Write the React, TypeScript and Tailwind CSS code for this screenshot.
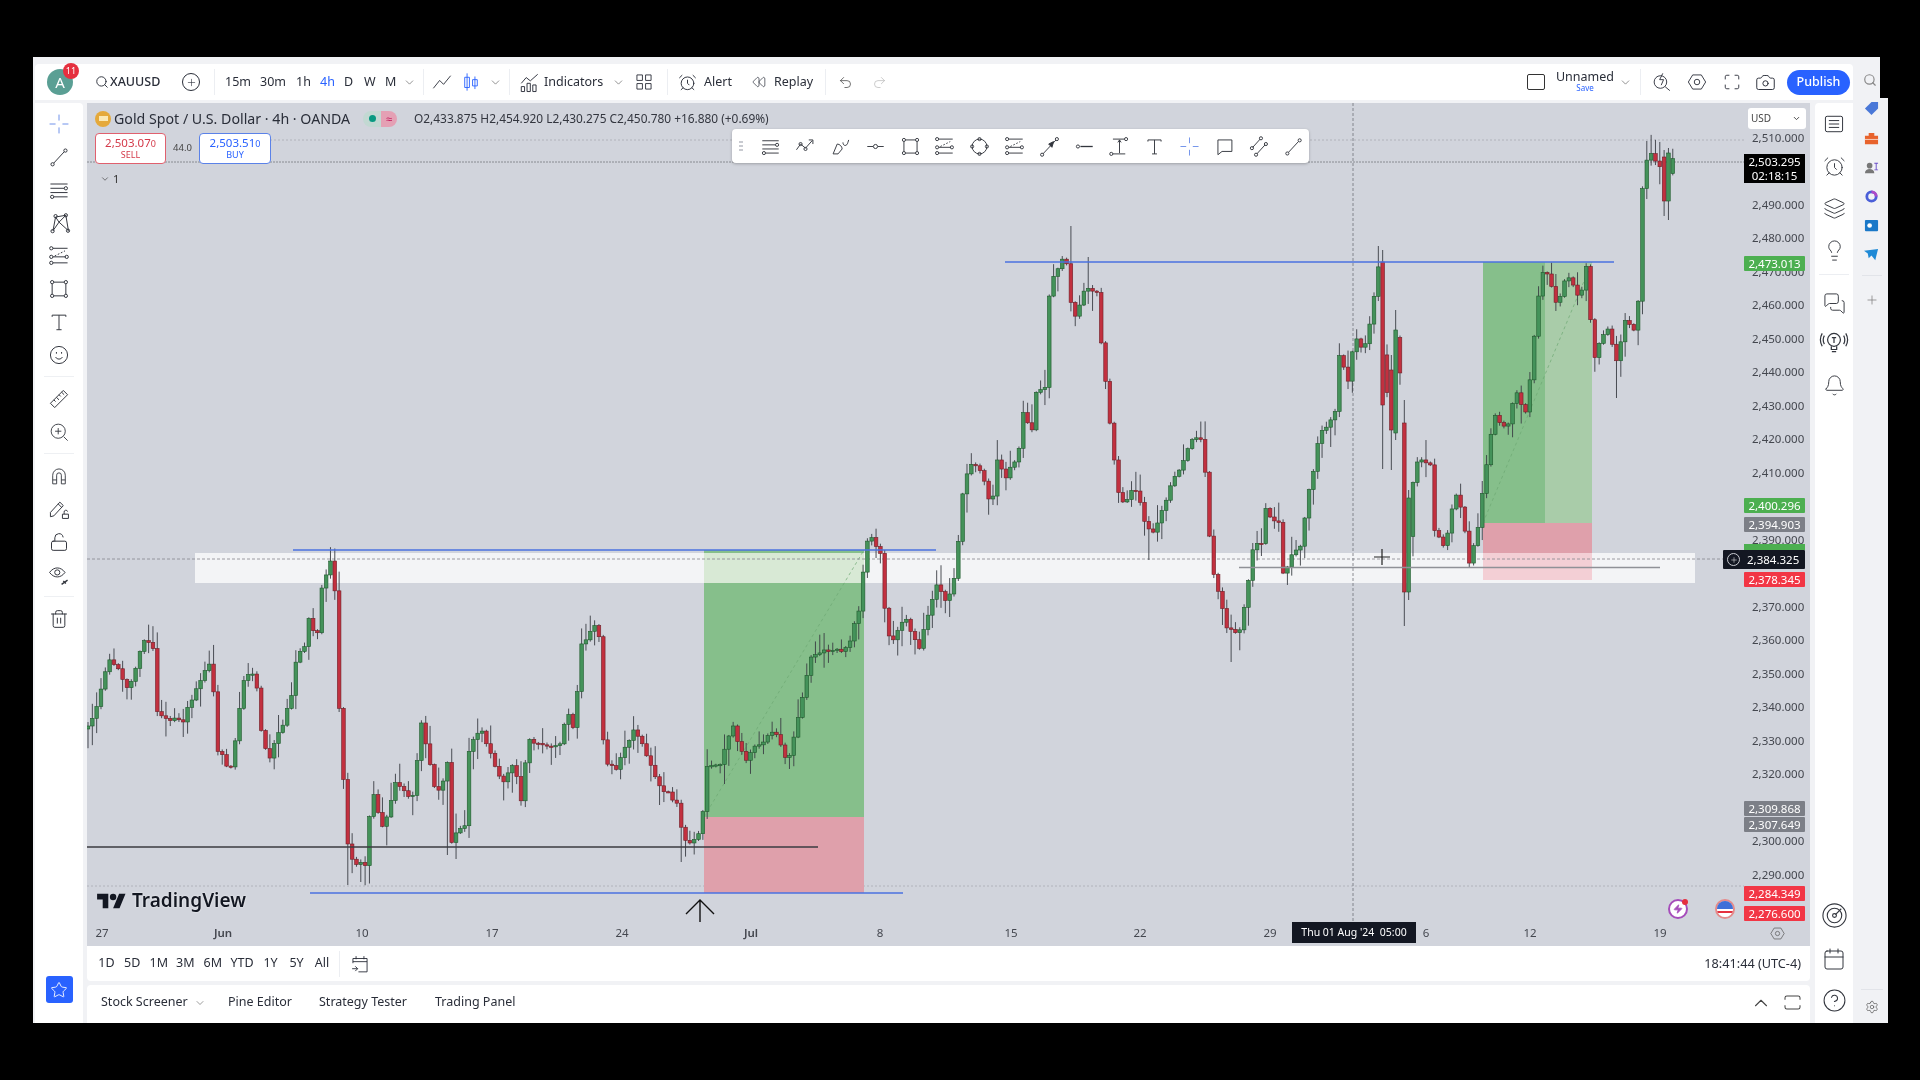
import React from 'react';
import {
  AlarmClock, Bell, Calendar, Camera, ChevronDown, ChevronUp, CircleHelp, Layers, Lightbulb,
  LockOpen, Maximize, MessagesSquare, Plus, Redo2, Rewind, Search, Settings, Star, Trash2, Undo2, Zap,
} from 'lucide-react';

const FONT = "font-['Noto_Sans','Liberation_Sans',sans-serif]";

// zoom-crop coordinates of the price path, converted to page pixels below
const leftPath = [[15,625],[35,530],[55,410],[90,510],[115,350],[135,380],[140,580],[185,610],[240,415],[250,690],[275,750],[300,460],[320,460],[330,625],[345,720],[385,540],[395,410],[415,380],[418,270],[430,385],[440,200],[462,90],[470,490],[480,770],[490,1020],[520,1035],[525,900],[535,830],[555,930],[575,780],[610,840],[620,590],[635,710],[650,840],[670,730],[675,970],[705,900],[710,660],[735,640],[770,790],[790,730],[805,850],[815,660],[880,680],[885,560],[900,630],[915,370],[945,310],[955,710],[975,750],[1010,620],[1050,780],[1090,860],[1100,970],[1125,965],[1135,885],[1140,735],[1165,745],[1190,610],[1210,720],[1265,630],[1290,735],[1320,510],[1335,400],[1400,390],[1425,240],[1430,90],[1440,50],[1460,110],[1465,235],[1478,375],[1505,290],[1530,385],[1560,200]]
  .map(([x, y]) => [80 + x / 1.823, 520 + y / 3]);
const rightPath = [[15,1320],[30,1230],[45,1000],[55,940],[75,940],[100,1070],[105,910],[125,970],[150,920],[155,775],[175,850],[185,715],[200,750],[205,500],[215,410],[240,355],[255,530],[280,440],[300,455],[310,630],[325,815],[340,1020],[355,1050],[370,985],[395,1110],[410,1120],[435,1020],[475,890],[490,855],[505,875],[510,1080],[525,1260],[550,1400],[575,1400],[600,1160],[615,1165],[620,1055],[650,1110],[652,1260],[675,1190],[690,1155],[700,1060],[725,860],[755,800],[760,610],[785,735],[790,580],[810,615],[825,515],[840,370],[850,770],[862,660],[875,560],[885,820],[890,1290],[900,1030],[915,905],[940,950],[945,1120],[965,1180],[985,1020],[1000,1060],[1010,1225],[1030,1110],[1040,980],[1050,880],[1060,800],[1085,830],[1100,735],[1120,790],[1130,665],[1145,465],[1155,375],[1180,490],[1200,405],[1225,475],[1235,365],[1250,640],[1280,540],[1290,670],[1310,530],[1325,570],[1335,470],[1340,195],[1355,40],[1365,85],[1380,110],[1390,200],[1395,65],[1410,85]]
  .map(([x, y]) => [940 + x / 1.912, 130 + y / 2.8]);
const path = [...leftPath, ...rightPath];

// long wicks read off the reference: x, tip y
const spikes = [[349,885],[362,882],[683,862],[447,855],[1232,662],[1072,226],[1617,398],[1150,560],[1379,246],[1648,141],[1090,257]];

// single large candles the sampling would split: x, open, close, high, low
const forced = [[1384,262,405,250,469],[1391,370,430,355,470],[1396,433,330,310,440],[1404,423,592,400,626],[1409,592,498,490,600],[1665,157,201,150,216],[1669,201,153,148,220]];

const interp = (x: number) => {
  for (let i = 1; i < path.length; i++) {
    if (x <= path[i][0]) {
      const [x0, y0] = path[i - 1];
      const [x1, y1] = path[i];
      return y0 + (y1 - y0) * ((x - x0) / Math.max(x1 - x0, 0.01));
    }
  }
  return path[path.length - 1][1];
};

let seed = 41;
const rand = () => {
  seed = (seed * 16807) % 2147483647;
  return seed / 2147483647;
};

const candles: { x: number; open: number; close: number; hi: number; lo: number }[] = [];
let prev = interp(88);
for (let x = 88; x <= 1677; x += 4.33) {
  const close = interp(x) + (rand() - 0.5) * 6;
  const top = Math.min(prev, close);
  const bot = Math.max(prev, close);
  let hi = top - Math.pow(rand(), 2) * 19 - 1;
  let lo = bot + Math.pow(rand(), 2) * 19 + 1;
  for (const [sx, sy] of spikes) {
    if (Math.abs(sx - x) <= 2.2) {
      if (sy < hi) hi = sy;
      if (sy > lo) lo = sy;
    }
  }
  candles.push({ x, open: prev, close, hi, lo });
  prev = close;
}
for (const [fx, open, close, hi, lo] of forced) {
  const c = candles.reduce((a, b) => (Math.abs(b.x - fx) < Math.abs(a.x - fx) ? b : a));
  Object.assign(c, { open, close, hi, lo });
}

const priceY = (p: number) => 138 + (2510 - p) * 3.348;
const priceTicks = [2510, 2490, 2480, 2470, 2460, 2450, 2440, 2430, 2420, 2410, 2390, 2370, 2360, 2350, 2340, 2330, 2320, 2300, 2290];
const dateTicks: [string, number, boolean][] = [['27',102,false],['Jun',223,true],['10',362,false],['17',492,false],['24',622,false],['Jul',751,true],['8',880,false],['15',1011,false],['22',1140,false],['29',1270,false],['6',1426,false],['12',1530,false],['19',1660,false]];
const tags: [string, number, string][] = [
  ['2,473.013', 256, 'bg-[#4caf50]'],
  ['2,400.296', 498, 'bg-[#4caf50]'],
  ['2,394.903', 517, 'bg-[#7c7f87]'],
  ['2,378.345', 572, 'bg-[#f23645]'],
  ['2,309.868', 801, 'bg-[#7c7f87]'],
  ['2,307.649', 817, 'bg-[#7c7f87]'],
  ['2,284.349', 886, 'bg-[#f23645]'],
  ['2,276.600', 906, 'bg-[#f23645]'],
];
const ranges: [string, string][] = [
  ['1D', 'w-[25px]'], ['5D', 'w-[26.5px]'], ['1M', 'w-[26.5px]'], ['3M', 'w-[26.5px]'], ['6M', 'w-[28.5px]'],
  ['YTD', 'w-[30px]'], ['1Y', 'w-[27px]'], ['5Y', 'w-[25px]'], ['All', 'w-[26px]'],
];

const Ic = ({ children, className = '', size = 24 }: { children: React.ReactNode; className?: string; size?: number }) => (
  <svg viewBox="0 0 28 28" width={size} height={size} fill="none" stroke="currentColor" strokeWidth={1.15} className={className}>
    {children}
  </svg>
);
const Dot = ({ x, y }: { x: number; y: number }) => <circle cx={x} cy={y} r={1.9} />;

const CrossIcon = () => <path d="M14 3v7M14 18v7M3 14h7M18 14h7" />;
const TrendIcon = () => <><path d="M8 21 20 8" /><Dot x={6.5} y={22.5} /><Dot x={21.5} y={6.5} /></>;
const FibIcon = () => <><path d="M4 7h20M4 12h16M4 17h20M8 22h16" /><Dot x={22} y={12} /><Dot x={6} y={22} /></>;
const XabcdIcon = () => <><path d="M7 23 10 7l12-2 3 18L14 13 22 5M10 7l4 6M7 23l7-10" /><Dot x={6.5} y={23.5} /><Dot x={10} y={6} /><Dot x={22} y={5} /><Dot x={24.5} y={23} /></>;
const ChannelIcon = () => <><path d="M7 5h17M7 15h15M7 22h17" /><path d="M9 14l12-6" strokeDasharray="2 2" /><Dot x={5} y={5} /><Dot x={5} y={15} /><Dot x={5} y={22} /><Dot x={23} y={15} /></>;
const RectIcon = () => <><path d="M6 8v12M22 8v12M8 6h12M8 22h12" /><Dot x={6} y={6} /><Dot x={22} y={6} /><Dot x={6} y={22} /><Dot x={22} y={22} /></>;
const TextIcon = () => <path d="M6 6h16M14 6v17M11 23h6M6 6v2M22 6v2" />;
const SmileIcon = () => <><circle cx={14} cy={14} r={10} /><path d="M10 16.5c2 3 6 3 8 0M11 10.5v2M17 10.5v2" /></>;
const RulerIcon = () => <path d="M4 19 19 4l5 5L9 24zM8 15l2 2M11 12l3 3M14 9l2 2M17 6l3 3" />;
const ZoomIcon = () => <><circle cx={13} cy={13} r={9} /><path d="M13 9v8M9 13h8M20 20l5 5" /></>;
const MagnetIcon = () => <path d="M6 24V13a8 8 0 0 1 16 0v11h-5V13a3 3 0 0 0-6 0v11zM6 19h5M17 19h5" />;
const PencilLockIcon = () => <><path d="M4 18 15 6l4 4L8 22l-4 1zM13 8l4 4" /><path d="M18 20h7v5h-7zM20 20v-2a2 2 0 0 1 4-1" /></>;
const EyeIcon = () => <><path d="M3 11c5-7 13-7 18 0-5 7-13 7-18 0z" /><circle cx={12} cy={11} r={3} /><path d="M17 25l7-5M19 21l3 3" strokeWidth={1.6} /></>;
const BrushIcon = () => <><path d="M5 23 10 11c3 0 6 3 6 6l-5 6z" /><path d="M17 9c0 5 5 5 6 0l1-3" /></>;
const LineDotIcon = () => <><path d="M4 14h7M17 14h7" /><circle cx={14} cy={14} r={2.5} /></>;
const PolyIcon = () => <><path d="M3 18l5-7 6 5 8-9M18 6h5v5" /><Dot x={8} y={11} /><Dot x={14} y={17} /></>;
const CircleDotsIcon = () => <><circle cx={14} cy={14} r={9} /><Dot x={14} y={5} /><Dot x={23} y={14} /><Dot x={14} y={23} /><Dot x={5} y={14} /></>;
const ArrowLineIcon = () => <><path d="M6 23 22 6" /><path d="M13 11l6-3-2 7z" fill="currentColor" /><Dot x={5} y={24} /><Dot x={23} y={5} /></>;
const RayIcon = () => <><path d="M9 14h15" strokeWidth={1.6} /><Dot x={6} y={14} /></>;
const RangeIcon = () => <><path d="M6 5h14M14 6v16M6 23h15" /><path d="M12 9l2-3 2 3" /><Dot x={22} y={5} /><Dot x={4} y={23} /></>;
const BubbleIcon = () => <path d="M6 6h17v14H11l-5 4z" />;
const DoubleIcon = () => <><path d="M7 15 16 5M12 23l10-11" /><Dot x={6} y={16} /><Dot x={17} y={4} /><Dot x={11} y={24} /><Dot x={23} y={11} /></>;
const SettingsHexIcon = () => <><path d="M3 14 8.500 5h11L25 14l-5.500 9h-11z" /><circle cx={14} cy={14} r={3.500} /></>;

const leftTools = [
  [<CrossIcon key="a" />, 'text-[#6f90ea]'],
  [<TrendIcon key="b" />, ''],
  [<FibIcon key="c" />, ''],
  [<XabcdIcon key="d" />, ''],
  [<ChannelIcon key="e" />, ''],
  [<RectIcon key="f" />, ''],
  [<TextIcon key="g" />, ''],
  [<SmileIcon key="h" />, ''],
] as const;

const floating = [
  [<FibIcon key="a" />, ''], [<PolyIcon key="b" />, ''], [<BrushIcon key="c" />, ''], [<LineDotIcon key="d" />, ''],
  [<RectIcon key="e" />, ''], [<ChannelIcon key="f" />, ''], [<CircleDotsIcon key="g" />, ''], [<ChannelIcon key="h" />, ''],
  [<ArrowLineIcon key="i" />, ''], [<RayIcon key="j" />, ''], [<RangeIcon key="k" />, ''], [<TextIcon key="l" />, ''],
  [<CrossIcon key="m" />, 'text-[#6f90ea]'], [<BubbleIcon key="n" />, ''], [<DoubleIcon key="o" />, ''], [<TrendIcon key="p" />, ''],
] as const;

const Sep = () => <div className="w-px h-[26px] bg-[#eceef2]" />;

const Header = () => (
  <div className="h-[36px] bg-white rounded-t-[4px] flex items-center text-[12.5px] text-[#2a2e39] shrink-0">
    <div className="relative w-[26px] h-[26px] ml-[12px] rounded-full bg-[#5a9f94] flex items-center justify-center text-white text-[15px]">
      A
      <div className="absolute -top-[6px] -right-[6px] w-[16px] h-[16px] rounded-full bg-[#e5303f] text-[9px] flex items-center justify-center">11</div>
    </div>
    <Search size={14} strokeWidth={1.6} className="ml-[22px]" />
    <span className="ml-[1px] font-medium w-[49px]">XAUUSD</span>
    <div className="ml-[23px] w-[18px] h-[18px] rounded-full border border-[#2a2e39] flex items-center justify-center"><Plus size={11} strokeWidth={1.3} /></div>
    <div className="ml-[14px]"><Sep /></div>
    <span className="ml-[10px] w-[35px]">15m</span>
    <span className="w-[36px]">30m</span>
    <span className="w-[24px]">1h</span>
    <span className="w-[24px] text-[#2962ff]">4h</span>
    <span className="w-[20px]">D</span>
    <span className="w-[21px]">W</span>
    <span className="w-[18px]">M</span>
    <ChevronDown size={13} strokeWidth={1.3} className="text-[#666]" />
    <div className="ml-[7px]"><Sep /></div>
    <Ic size={22} className="ml-[7px]"><path d="M3 22 11 12l5 5 9-11" /></Ic>
    <Ic size={22} className="ml-[7px] text-[#2962ff]"><path d="M9 3v22M19 7v16M6 8h6v13H6zM16 11h6v8h-6z" /></Ic>
    <ChevronDown size={13} strokeWidth={1.3} className="ml-[7px] text-[#666]" />
    <div className="ml-[7px]"><Sep /></div>
    <Ic size={23} className="ml-[8px]"><path d="M4 15l6-7 5 4 9-8M4 25v-6h4v6zM11 25V15h4v10zM18 25v-8h4v8z" /></Ic>
    <span className="ml-[3px] w-[64px]">Indicators</span>
    <ChevronDown size={13} strokeWidth={1.3} className="ml-[4px] text-[#666]" />
    <Ic size={22} className="ml-[8px]"><path d="M5 5h7v7H5zM16 5h7v7h-7zM5 16h7v7H5zM16 16h7v7h-7z" /></Ic>
    <div className="ml-[12px]"><Sep /></div>
    <AlarmClock size={19} strokeWidth={1.2} className="ml-[10px]" />
    <span className="ml-[7px] w-[28px]">Alert</span>
    <Rewind size={14} strokeWidth={1.2} className="ml-[20px]" />
    <span className="ml-[8px] w-[40px]">Replay</span>
    <div className="ml-[11px]"><Sep /></div>
    <Undo2 size={15} strokeWidth={1.2} className="ml-[12px] text-[#444]" />
    <Redo2 size={15} strokeWidth={1.2} className="ml-[19px] text-[#bbb]" />
    <div className="flex-1" />
    <div className="w-[18px] h-[16px] rounded-[2px] border border-[#333]" />
    <div className="ml-[13px] w-[54px] flex flex-col items-center leading-[11px]">
      <span className="text-[12.5px]">Unnamed</span>
      <span className="text-[8px] text-[#2962ff]">Save</span>
    </div>
    <ChevronDown size={13} strokeWidth={1.3} className="ml-[7px] text-[#666]" />
    <div className="ml-[8px]"><Sep /></div>
    <Ic size={22} className="ml-[10px]"><circle cx={12} cy={14} r={8} /><path d="M18 20l6 5M15 3l-4 8h5l-3 7" /></Ic>
    <Ic size={22} className="ml-[13px]"><SettingsHexIcon /></Ic>
    <Maximize size={18} strokeWidth={1.2} className="ml-[15px]" />
    <Camera size={21} strokeWidth={1.1} className="ml-[14px]" />
    <div className="ml-[11px] mr-[3px] w-[63px] h-[25px] rounded-full bg-[#2962ff] text-white flex items-center justify-center text-[12.5px] font-medium">Publish</div>
  </div>
);

const LeftBar = () => (
  <div className="w-[48px] shrink-0 bg-white rounded-tr-[4px] flex flex-col items-center pt-[5px] text-[#33363e]">
    <div className="h-[32px] flex items-center justify-center text-[#6f90ea]"><Ic>{leftTools[0][0]}</Ic></div>
    {leftTools.slice(1).map(([node, cls], i) => (
      <div key={i} className={`h-[33px] flex items-center justify-center ${cls}`}><Ic>{node}</Ic></div>
    ))}
    <div className="w-[30px] h-px bg-[#eef0f3] my-[5px]" />
    <div className="h-[33px] flex items-center"><Ic><RulerIcon /></Ic></div>
    <div className="h-[33px] flex items-center"><Ic size={22}><ZoomIcon /></Ic></div>
    <div className="w-[30px] h-px bg-[#eef0f3] my-[5px]" />
    <div className="h-[33px] flex items-center"><Ic size={22}><MagnetIcon /></Ic></div>
    <div className="h-[33px] flex items-center"><Ic><PencilLockIcon /></Ic></div>
    <div className="h-[33px] flex items-center"><LockOpen size={20} strokeWidth={1.2} /></div>
    <div className="h-[33px] flex items-center"><Ic><EyeIcon /></Ic></div>
    <div className="w-[30px] h-px bg-[#eef0f3] my-[5px]" />
    <div className="h-[34px] flex items-center"><Trash2 size={20} strokeWidth={1.2} /></div>
    <div className="flex-1" />
    <div className="w-[27px] h-[27px] mb-[20px] rounded-[3px] bg-[#2962ff] flex items-center justify-center"><Star size={18} strokeWidth={1.2} className="text-white" /></div>
  </div>
);

const Chart = () => (
  <div className="relative h-[843px] bg-[#d1d4dc] overflow-hidden">
    <svg viewBox="87 103 1723 843" className="absolute inset-0 w-full h-full">
      <line x1={270} x2={1744} y1={140} y2={140} stroke="#a9abb2" strokeDasharray="2 2" strokeWidth={0.8} />
      <line x1={87} x2={1744} y1={162} y2={162} stroke="#77797f" strokeDasharray="2 1" strokeWidth={0.8} />
      <line x1={87} x2={1744} y1={886} y2={886} stroke="#a9abb2" strokeDasharray="2 2" strokeWidth={0.8} />
      <rect x={195} y={553} width={1500} height={30} fill="#f3f4f6" />
      <rect x={704} y={550} width={160} height={267} fill="#86bf8b" />
      <rect x={704} y={553} width={160} height={30} fill="#d8e9d5" />
      <rect x={704} y={817} width={160} height={76} fill="#dfa0ab" />
      <rect x={1483} y={262} width={62} height={261} fill="#86bf8b" />
      <rect x={1545} y={262} width={47} height={261} fill="#a9cca9" />
      <rect x={1483} y={523} width={109} height={30} fill="#dfa0ab" />
      <rect x={1483} y={553} width={109} height={27} fill="#f3cfd5" />
      <line x1={704} x2={864} y1={817} y2={550} stroke="#6da873" strokeDasharray="3 3" strokeWidth={0.7} />
      <line x1={1483} x2={1592} y1={523} y2={262} stroke="#6da873" strokeDasharray="3 3" strokeWidth={0.7} />
      <line x1={87} x2={1744} y1={559} y2={559} stroke="#85878d" strokeDasharray="3 2" strokeWidth={0.8} />
      <line x1={1353} x2={1353} y1={103} y2={922} stroke="#6f7178" strokeDasharray="3 2" strokeWidth={0.8} />
      {candles.map((c, i) => {
        const up = c.close < c.open;
        return (
          <g key={i}>
            <line x1={c.x} x2={c.x} y1={c.hi} y2={c.lo} stroke="#3a3d44" strokeWidth={0.9} />
            <rect
              x={c.x - 1.8}
              y={Math.min(c.open, c.close)}
              width={3.6}
              height={Math.max(Math.abs(c.close - c.open), 1.2)}
              fill={up ? '#44925a' : '#c2303f'}
              stroke={up ? '#1f5a2c' : '#6e2029'}
              strokeWidth={0.6}
            />
          </g>
        );
      })}
      <line x1={293} x2={936} y1={550} y2={550} stroke="#4a72e0" strokeWidth={1.5} />
      <line x1={310} x2={903} y1={893} y2={893} stroke="#4a72e0" strokeWidth={1.5} />
      <line x1={1005} x2={1614} y1={262} y2={262} stroke="#4a72e0" strokeWidth={1.5} />
      <line x1={87} x2={818} y1={847} y2={847} stroke="#3a3b40" strokeWidth={1.5} />
      <line x1={1239} x2={1660} y1={567.5} y2={567.5} stroke="#8f9197" strokeWidth={1.3} />
      <path d="M700 900v22M686 914l14-14 14 14" stroke="#111" strokeWidth={1.4} fill="none" />
      <path d="M1382 549v16M1374 557h16" stroke="#222" strokeWidth={1.2} />
    </svg>

    {/* legend */}
    <div className="absolute left-[8px] top-[7px] flex items-center text-[#2a2e39]">
      <div className="w-[16px] h-[16px] rounded-full bg-[#e5a93a] flex items-center justify-center"><div className="w-[9px] h-[5px] bg-[#fbe9b5]" /></div>
      <span className="ml-[3px] text-[14.2px] leading-[16px] w-[249px] whitespace-nowrap">Gold Spot / U.S. Dollar · 4h · OANDA</span>
      <div className="w-[18px] h-[16px] rounded-l-full bg-[#c2d8d2] flex items-center justify-center"><div className="w-[7px] h-[7px] rounded-full bg-[#089981]" /></div>
      <div className="w-[16px] h-[16px] rounded-r-full bg-[#e4a0b4] flex items-center justify-center text-[11px] leading-none text-[#c2185b]">≈</div>
      <span className="ml-[17px] text-[11.9px] text-[#33363f] whitespace-nowrap">O2,433.875 H2,454.920 L2,430.275 C2,450.780 +16.880 (+0.69%)</span>
    </div>
    <div className="absolute left-[8px] top-[30px] flex items-center">
      <div className="w-[71px] h-[31px] bg-white rounded-[4px] border border-[#e0606e] flex flex-col items-center justify-center leading-[11px] text-[#d43a4a]">
        <span className="text-[11.5px]">2,503.07<span className="text-[9px]">0</span></span>
        <span className="text-[9px]">SELL</span>
      </div>
      <span className="w-[33px] text-center text-[9.5px] text-[#444]">44.0</span>
      <div className="w-[72px] h-[31px] bg-white rounded-[4px] border border-[#5b82e8] flex flex-col items-center justify-center leading-[11px] text-[#2962ff]">
        <span className="text-[11.5px]">2,503.51<span className="text-[9px]">0</span></span>
        <span className="text-[9px]">BUY</span>
      </div>
    </div>
    <div className="absolute left-[13px] top-[68px] flex items-center gap-[3px] text-[11px] text-[#333]">
      <ChevronDown size={10} strokeWidth={1.5} />1
    </div>

    {/* floating drawing toolbar */}
    <div className="absolute left-[645px] top-[26px] w-[577px] h-[34px] bg-white rounded-[4px] shadow-[0_1px_3px_rgba(0,0,0,0.25)] flex items-center pl-[7px] text-[#33363e]">
      <div className="w-[9px] grid grid-cols-2 gap-[2px] mr-[12px]">
        {[0, 1, 2, 3, 4, 5].map(i => <div key={i} className="w-[2px] h-[2px] bg-[#c9cbd1]" />)}
      </div>
      {floating.map(([node, cls], i) => (
        <div key={i} className={`w-[34.9px] shrink-0 flex justify-center ${cls}`}><Ic size={23}>{node}</Ic></div>
      ))}
    </div>

    {/* watermark */}
    <div className="absolute left-[10px] top-[788px] flex items-center">
      <svg viewBox="0 3 36 20" width={29} height={16} fill="#131722"><path d="M14 22H7V11H0V4h14v18zM28 22h-8l7.5-18h8L28 22z" /><circle cx={20} cy={8} r={4} /></svg>
      <span className="ml-[6px] text-[19px] font-semibold leading-none text-[#131722] [text-shadow:0_0_2px_white]">TradingView</span>
    </div>

    {/* price axis */}
    <div className="absolute left-[1661px] top-[5px] w-[58px] h-[21px] bg-white rounded-[3px] flex items-center justify-between pl-[3px] pr-[5px] text-[10px] text-[#444]">
      USD<ChevronDown size={9} strokeWidth={2.5} />
    </div>
    {priceTicks.map(p => (
      <span key={p} className="absolute left-[1665px] text-[11.5px] leading-[14px] text-[#44474f]" style={{ top: priceY(p) - 103 - 7 }}>
        {`2,${p - 2000}.000`}
      </span>
    ))}
    <div className="absolute left-[1657px] top-[441px] w-[61px] h-[6px] bg-[#4caf50]" />
    {tags.map(([t, y, bg]) => (
      <div key={t} className={`absolute left-[1657px] w-[61px] h-[15px] rounded-[1px] text-white text-[11.5px] leading-[15px] text-center ${bg}`} style={{ top: y - 103 }}>{t}</div>
    ))}
    <div className="absolute left-[1657px] top-[51px] w-[61px] h-[29px] bg-black text-white text-[11.5px] leading-[14px] text-center pt-px">2,503.295<br />02:18:15</div>
    <div className="absolute left-[1636px] top-[447px] w-[82px] h-[19px] rounded-[1px] bg-[#131722] text-white text-[11.5px] leading-[19px] flex items-center">
      <div className="w-[21px] flex justify-center"><div className="w-[13px] h-[13px] rounded-full border border-[#c9cbd1] flex items-center justify-center"><Plus size={8} strokeWidth={1.5} /></div></div>
      <span className="ml-[3px]">2,384.325</span>
    </div>

    {/* time axis */}
    {dateTicks.map(([t, x, bold]) => (
      <span key={t} className={`absolute top-[822px] -translate-x-1/2 text-[11.5px] leading-[16px] text-[#44474f] ${bold ? 'font-semibold' : ''}`} style={{ left: x - 87 }}>{t}</span>
    ))}
    <div className="absolute left-[1205px] top-[819px] w-[124px] h-[21px] bg-[#131722] text-white text-[10.5px] leading-[21px] text-center whitespace-nowrap">Thu 01 Aug '24&nbsp; 05:00</div>
    <Ic size={17} className="absolute left-[1682px] top-[822px] text-[#555]"><SettingsHexIcon /></Ic>
    <div className="absolute left-[1581px] top-[796px] w-[20px] h-[20px] rounded-full border-2 border-[#a64dbb] bg-white flex items-center justify-center">
      <Zap size={10} className="text-[#a64dbb]" fill="#a64dbb" />
      <div className="absolute -top-[2px] -right-[2px] w-[6px] h-[6px] rounded-full bg-[#e5303f]" />
    </div>
    <div className="absolute left-[1628px] top-[796px] w-[20px] h-[20px] rounded-full border-2 border-[#e58a8a] overflow-hidden flex flex-col">
      <div className="h-[8px] bg-[#3f6fd8]" />
      <div className="h-[2px] bg-white" />
      <div className="h-[2px] bg-[#e5303f]" />
      <div className="flex-1 bg-white" />
    </div>
  </div>
);

const RangeBar = () => (
  <div className="h-[35px] bg-white rounded-b-[4px] flex items-center text-[12.5px] text-[#2a2e39]">
    <div className="ml-[7px] flex">
      {ranges.map(([t, w]) => <span key={t} className={`${w} text-center`}>{t}</span>)}
    </div>
    <div className="ml-[4px]"><Sep /></div>
    <Ic size={22} className="ml-[9px]"><path d="M5 13V7h18v17H12M5 11h18M9 4v4M19 4v4M4 20h7M8 17l3 3-3 3" /></Ic>
    <div className="flex-1" />
    <span className="mr-[9px] text-[12.7px]">18:41:44 (UTC-4)</span>
  </div>
);

const BottomTabs = () => (
  <div className="h-[35px] mt-[4px] bg-white rounded-t-[4px] flex items-center text-[12.5px] text-[#2a2e39]">
    <span className="ml-[14px] w-[93px] whitespace-nowrap">Stock Screener</span>
    <ChevronDown size={12} strokeWidth={1.3} className="text-[#666]" />
    <span className="ml-[22px] w-[91px] whitespace-nowrap">Pine Editor</span>
    <span className="w-[116px] whitespace-nowrap">Strategy Tester</span>
    <span className="whitespace-nowrap">Trading Panel</span>
    <div className="flex-1" />
    <ChevronUp size={22} strokeWidth={1.2} className="text-[#444]" />
    <svg viewBox="0 0 18 16" width={17} height={15} fill="none" stroke="#444" strokeWidth={1.1} className="ml-[12px] mr-[9px]"><path d="M1 5V3a2 2 0 0 1 2-2h12a2 2 0 0 1 2 2v2M1 11v2a2 2 0 0 0 2 2h12a2 2 0 0 0 2-2v-2" /></svg>
  </div>
);

const RightBar = () => (
  <div className="w-[38px] shrink-0 bg-white rounded-tl-[4px] flex flex-col items-center pt-[6px] text-[#33363e]">
    <div className="h-[30px] flex items-center"><Ic><path d="M6 5h16a2 2 0 0 1 2 2v14a2 2 0 0 1-2 2H6a2 2 0 0 1-2-2V7a2 2 0 0 1 2-2zM8 10h12M8 14h12M8 18h12" /></Ic></div>
    <div className="h-[42px] mt-[6px] flex items-center"><AlarmClock size={23} strokeWidth={1} /></div>
    <div className="h-[42px] flex items-center"><Layers size={23} strokeWidth={1} /></div>
    <div className="h-[42px] flex items-center"><Lightbulb size={23} strokeWidth={1} /></div>
    <div className="w-[30px] h-px bg-[#eceef2] my-[3px]" />
    <div className="h-[42px] mt-[4px] flex items-center"><MessagesSquare size={23} strokeWidth={1} /></div>
    <div className="h-[36px] flex items-center"><Ic size={30}><circle cx={14} cy={12} r={6} /><path d="M11.5 18v3h5v-3M12 23h4M14 10v5M12 10h4M5 8c-1.5 2.5-1.5 5 0 8M3 6c-2 3.500-2 8.500 0 12M23 8c1.500 2.500 1.500 5 0 8M25 6c2 3.500 2 8.500 0 12" /></Ic></div>
    <div className="h-[42px] mt-[4px] flex items-center"><Bell size={23} strokeWidth={1} /></div>
    <div className="flex-1" />
    <div className="h-[44px] flex items-center"><Ic size={27}><circle cx={14} cy={14} r={12} /><circle cx={14} cy={14} r={7.500} /><circle cx={14} cy={14} r={2} /><path d="M15 13l6-6" /></Ic></div>
    <div className="h-[44px] flex items-center"><Calendar size={24} strokeWidth={1} /></div>
    <div className="h-[38px] mb-[4px] flex items-center"><CircleHelp size={25} strokeWidth={1} /></div>
  </div>
);

const FarPanel = () => (
  <div className="relative w-[33px] shrink-0 ml-[2px] flex flex-col items-center pt-[15px]">
    <div className="absolute right-0 top-0 w-[8px] h-[41px] bg-black" />
    <Search size={14} strokeWidth={2} className="h-[16px] text-[#888] mr-[4px]" />
    <svg viewBox="0 0 16 16" width={15} height={15} className="mt-[13px]"><path d="M1 8 8 1h7v7l-7 7z" fill="#4a78d8" /></svg>
    <svg viewBox="0 0 16 16" width={15} height={15} className="mt-[15px]"><path d="M1 5h14v9H1zM5 5V2h6v3" fill="#e8632c" /><path d="M1 9h14" stroke="#fff" strokeWidth={0.7} /></svg>
    <svg viewBox="0 0 16 16" width={15} height={15} className="mt-[14px]"><circle cx={6} cy={6} r={3} fill="#777" /><path d="M1 14c0-6 10-6 10 0z" fill="#777" /><path d="M11 3h4v1h-1.500v6H15v1h-4v-1h1.500V4H11z" fill="#6b4fc8" /></svg>
    <svg viewBox="0 0 16 16" width={15} height={15} className="mt-[14px]"><circle cx={8} cy={8} r={5} fill="none" stroke="#4a5fd8" strokeWidth={3} /><path d="M8 3a5 5 0 0 1 5 5" fill="none" stroke="#b04ac8" strokeWidth={3} /></svg>
    <svg viewBox="0 0 16 16" width={15} height={15} className="mt-[14px]"><rect x={1} y={2} width={14} height={12} rx={1} fill="#1a78c8" /><circle cx={6} cy={8} r={2.500} fill="#fff" /></svg>
    <svg viewBox="0 0 16 16" width={15} height={15} className="mt-[14px]"><path d="M0 4l15-2-3 12-4-5-3 3-1-5z" fill="#1f8ad6" /></svg>
    <div className="w-[20px] h-px bg-[#e2e4e9] mt-[13px]" />
    <Plus size={14} strokeWidth={1.2} className="mt-[17px] text-[#777]" />
    <div className="flex-1" />
    <div className="w-[22px] h-px bg-[#e2e4e9]" />
    <Settings size={14} strokeWidth={1.2} className="mt-[10px] mb-[9px] text-[#555]" />
  </div>
);

export default function App() {
  return (
    <div className={`${FONT} w-[1920px] h-[1080px] bg-black overflow-hidden pt-[57px] pb-[57px] pl-[33px] pr-[32px] flex blur-[0.5px]`}>
      <div className="flex-1 flex bg-[#f1f2f5] min-w-0">
        <div className="flex-1 flex flex-col pt-[7px] pl-[2px] min-w-0">
          <Header />
          <div className="flex-1 flex pt-[3px] min-h-0">
            <LeftBar />
            <div className="w-[1723px] ml-[4px] mr-[5px] shrink-0 flex flex-col">
              <Chart />
              <RangeBar />
              <BottomTabs />
              <div className="flex-1 bg-white" />
            </div>
            <RightBar />
          </div>
        </div>
        <FarPanel />
      </div>
    </div>
  );
}
